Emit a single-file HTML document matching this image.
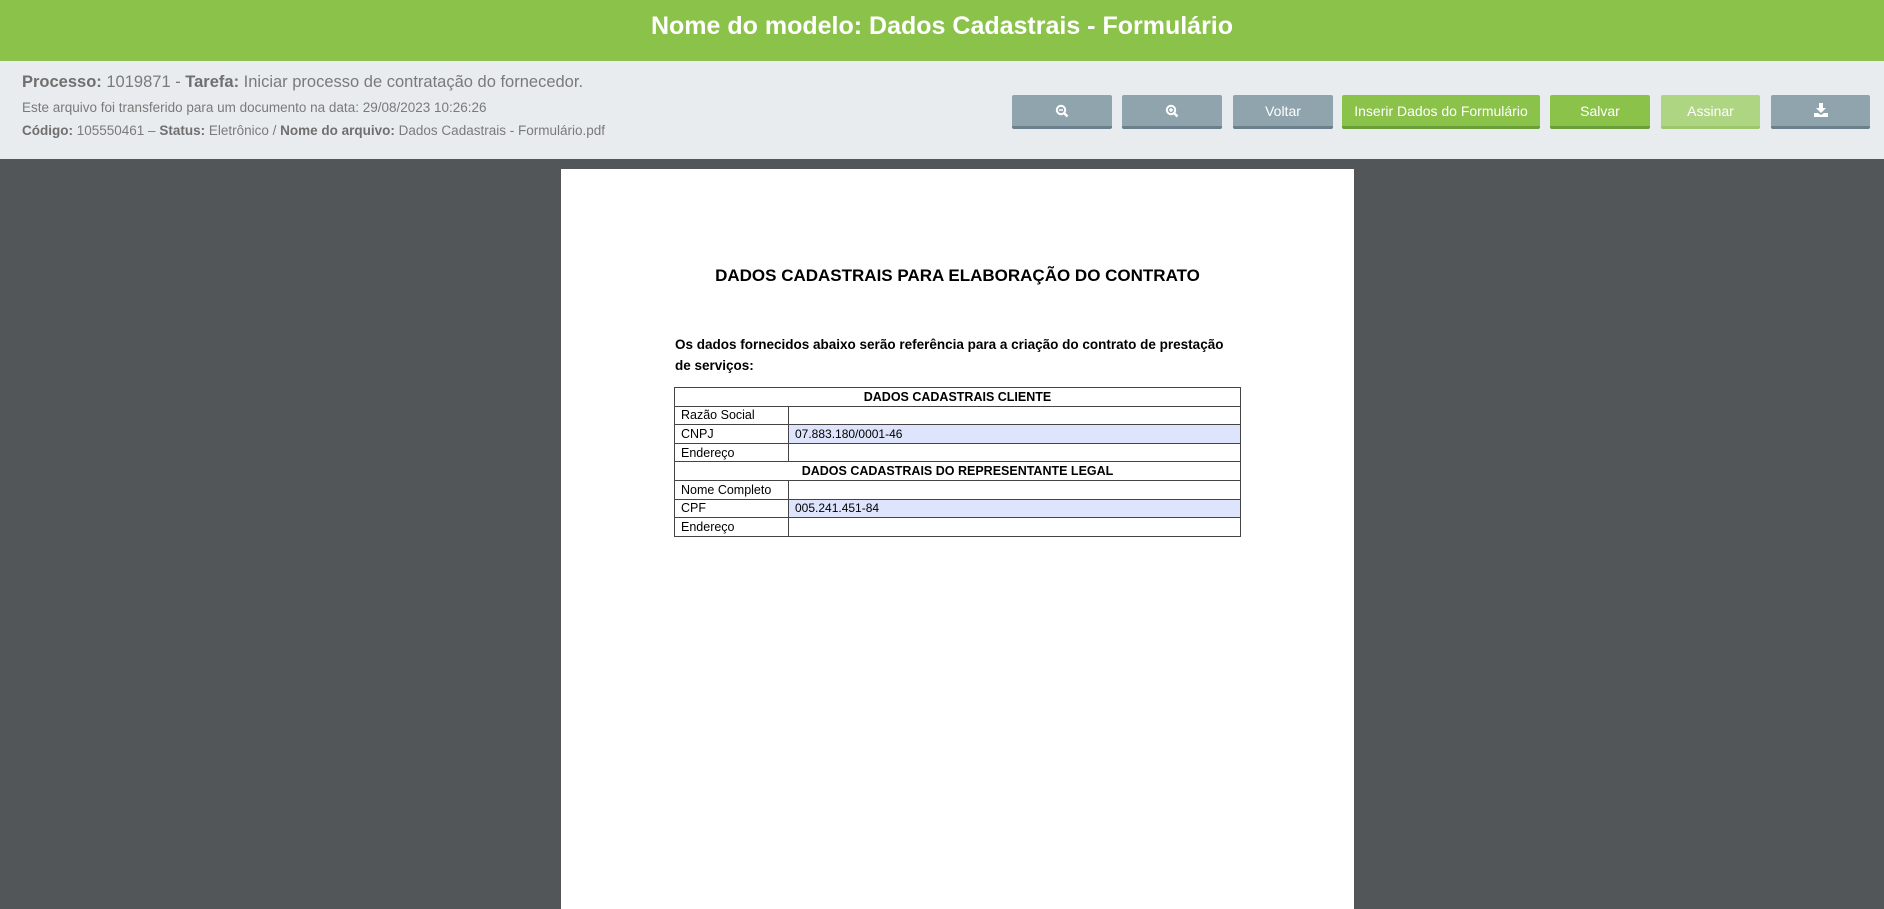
<!DOCTYPE html>
<html><head><meta charset="utf-8"><style>
*{margin:0;padding:0;box-sizing:border-box}
body{width:1884px;height:907px;overflow:hidden;background:#525659;font-family:"Liberation Sans",Arial,sans-serif;position:relative}
.hdr{position:absolute;left:0;top:0;width:1884px;height:61px;background:#8bc34a;color:#fff;font-weight:bold;font-size:25px;text-align:center;line-height:52px}
.bar{position:absolute;left:0;top:61px;width:1884px;height:98px;background:#e8ecef;color:#7a7a7a}
.l1{position:absolute;left:22px;top:12px;font-size:16.5px}
.l2{position:absolute;left:22px;top:39px;font-size:13.5px}
.l3{position:absolute;left:22px;top:62px;font-size:13.5px}
b{color:#6f6f6f}
.btn{position:absolute;top:34px;height:34px;border-radius:2px;background:#90a4ae;border-bottom:3px solid #6a808c;color:#fff;font-size:14px;text-align:center;line-height:32px}
.g{background:#8bc34a;border-bottom-color:#689f38}
.ga{background:#aed581;border-bottom-color:#9cc76d}
.page{position:absolute;left:561px;top:169px;width:793px;height:740px;background:#fff;color:#000}
.page h1{position:absolute;left:0;width:793px;top:97px;text-align:center;font-size:17px;font-weight:bold}
.p{position:absolute;left:114px;top:165px;width:600px;font-size:13.5px;font-weight:bold;line-height:21px}
table{position:absolute;left:113px;top:218px;width:567px;border-collapse:collapse;font-size:12.5px}
td{border:1px solid #444;height:18.6px;padding:0 6px;line-height:16px}
td.c{text-align:center;font-weight:bold}
td.v{background:#dde4fb;font-size:12px}
td.k{width:114px}
</style></head><body>
<div class="hdr">Nome do modelo: Dados Cadastrais - Formulário</div>
<div class="bar">
<div class="l1"><b>Processo:</b> 1019871 - <b>Tarefa:</b> Iniciar processo de contratação do fornecedor.</div>
<div class="l2">Este arquivo foi transferido para um documento na data: 29/08/2023 10:26:26</div>
<div class="l3"><b>Código:</b> 105550461 – <b>Status:</b> Eletrônico / <b>Nome do arquivo:</b> Dados Cadastrais - Formulário.pdf</div>
<div class="btn" style="left:1012px;width:100px"><svg width="14" height="14" viewBox="0 0 14 14" style="vertical-align:-2px"><circle cx="6" cy="6" r="4.2" fill="none" stroke="#fff" stroke-width="2"/><path d="M9 9l3.5 3.5" stroke="#fff" stroke-width="2.4"/><path d="M4 6h4" stroke="#fff" stroke-width="1.5"/></svg></div>
<div class="btn" style="left:1122px;width:100px"><svg width="14" height="14" viewBox="0 0 14 14" style="vertical-align:-2px"><circle cx="6" cy="6" r="4.2" fill="none" stroke="#fff" stroke-width="2"/><path d="M9 9l3.5 3.5" stroke="#fff" stroke-width="2.4"/><path d="M4 6h4M6 4v4" stroke="#fff" stroke-width="1.5"/></svg></div>
<div class="btn" style="left:1233px;width:100px">Voltar</div>
<div class="btn g" style="left:1342px;width:198px">Inserir Dados do Formulário</div>
<div class="btn g" style="left:1550px;width:100px">Salvar</div>
<div class="btn ga" style="left:1661px;width:99px">Assinar</div>
<div class="btn" style="left:1771px;width:99px"><svg width="16" height="16" viewBox="0 0 16 16" style="vertical-align:-2px"><path d="M6 1h4v5h3l-5 5-5-5h3z" fill="#fff"/><path d="M1 11h4l3 2 3-2h4v4H1z" fill="#fff"/></svg></div>
</div>
<div class="page">
<h1>DADOS CADASTRAIS PARA ELABORAÇÃO DO CONTRATO</h1>
<div class="p">Os dados fornecidos abaixo serão referência para a criação do contrato de prestação<br>de serviços:</div>
<table>
<tr><td colspan="2" class="c">DADOS CADASTRAIS CLIENTE</td></tr>
<tr><td class="k">Razão Social</td><td></td></tr>
<tr><td class="k">CNPJ</td><td class="v">07.883.180/0001-46</td></tr>
<tr><td class="k">Endereço</td><td></td></tr>
<tr><td colspan="2" class="c">DADOS CADASTRAIS DO REPRESENTANTE LEGAL</td></tr>
<tr><td class="k">Nome Completo</td><td></td></tr>
<tr><td class="k">CPF</td><td class="v">005.241.451-84</td></tr>
<tr><td class="k">Endereço</td><td></td></tr>
</table>
</div>
</body></html>
